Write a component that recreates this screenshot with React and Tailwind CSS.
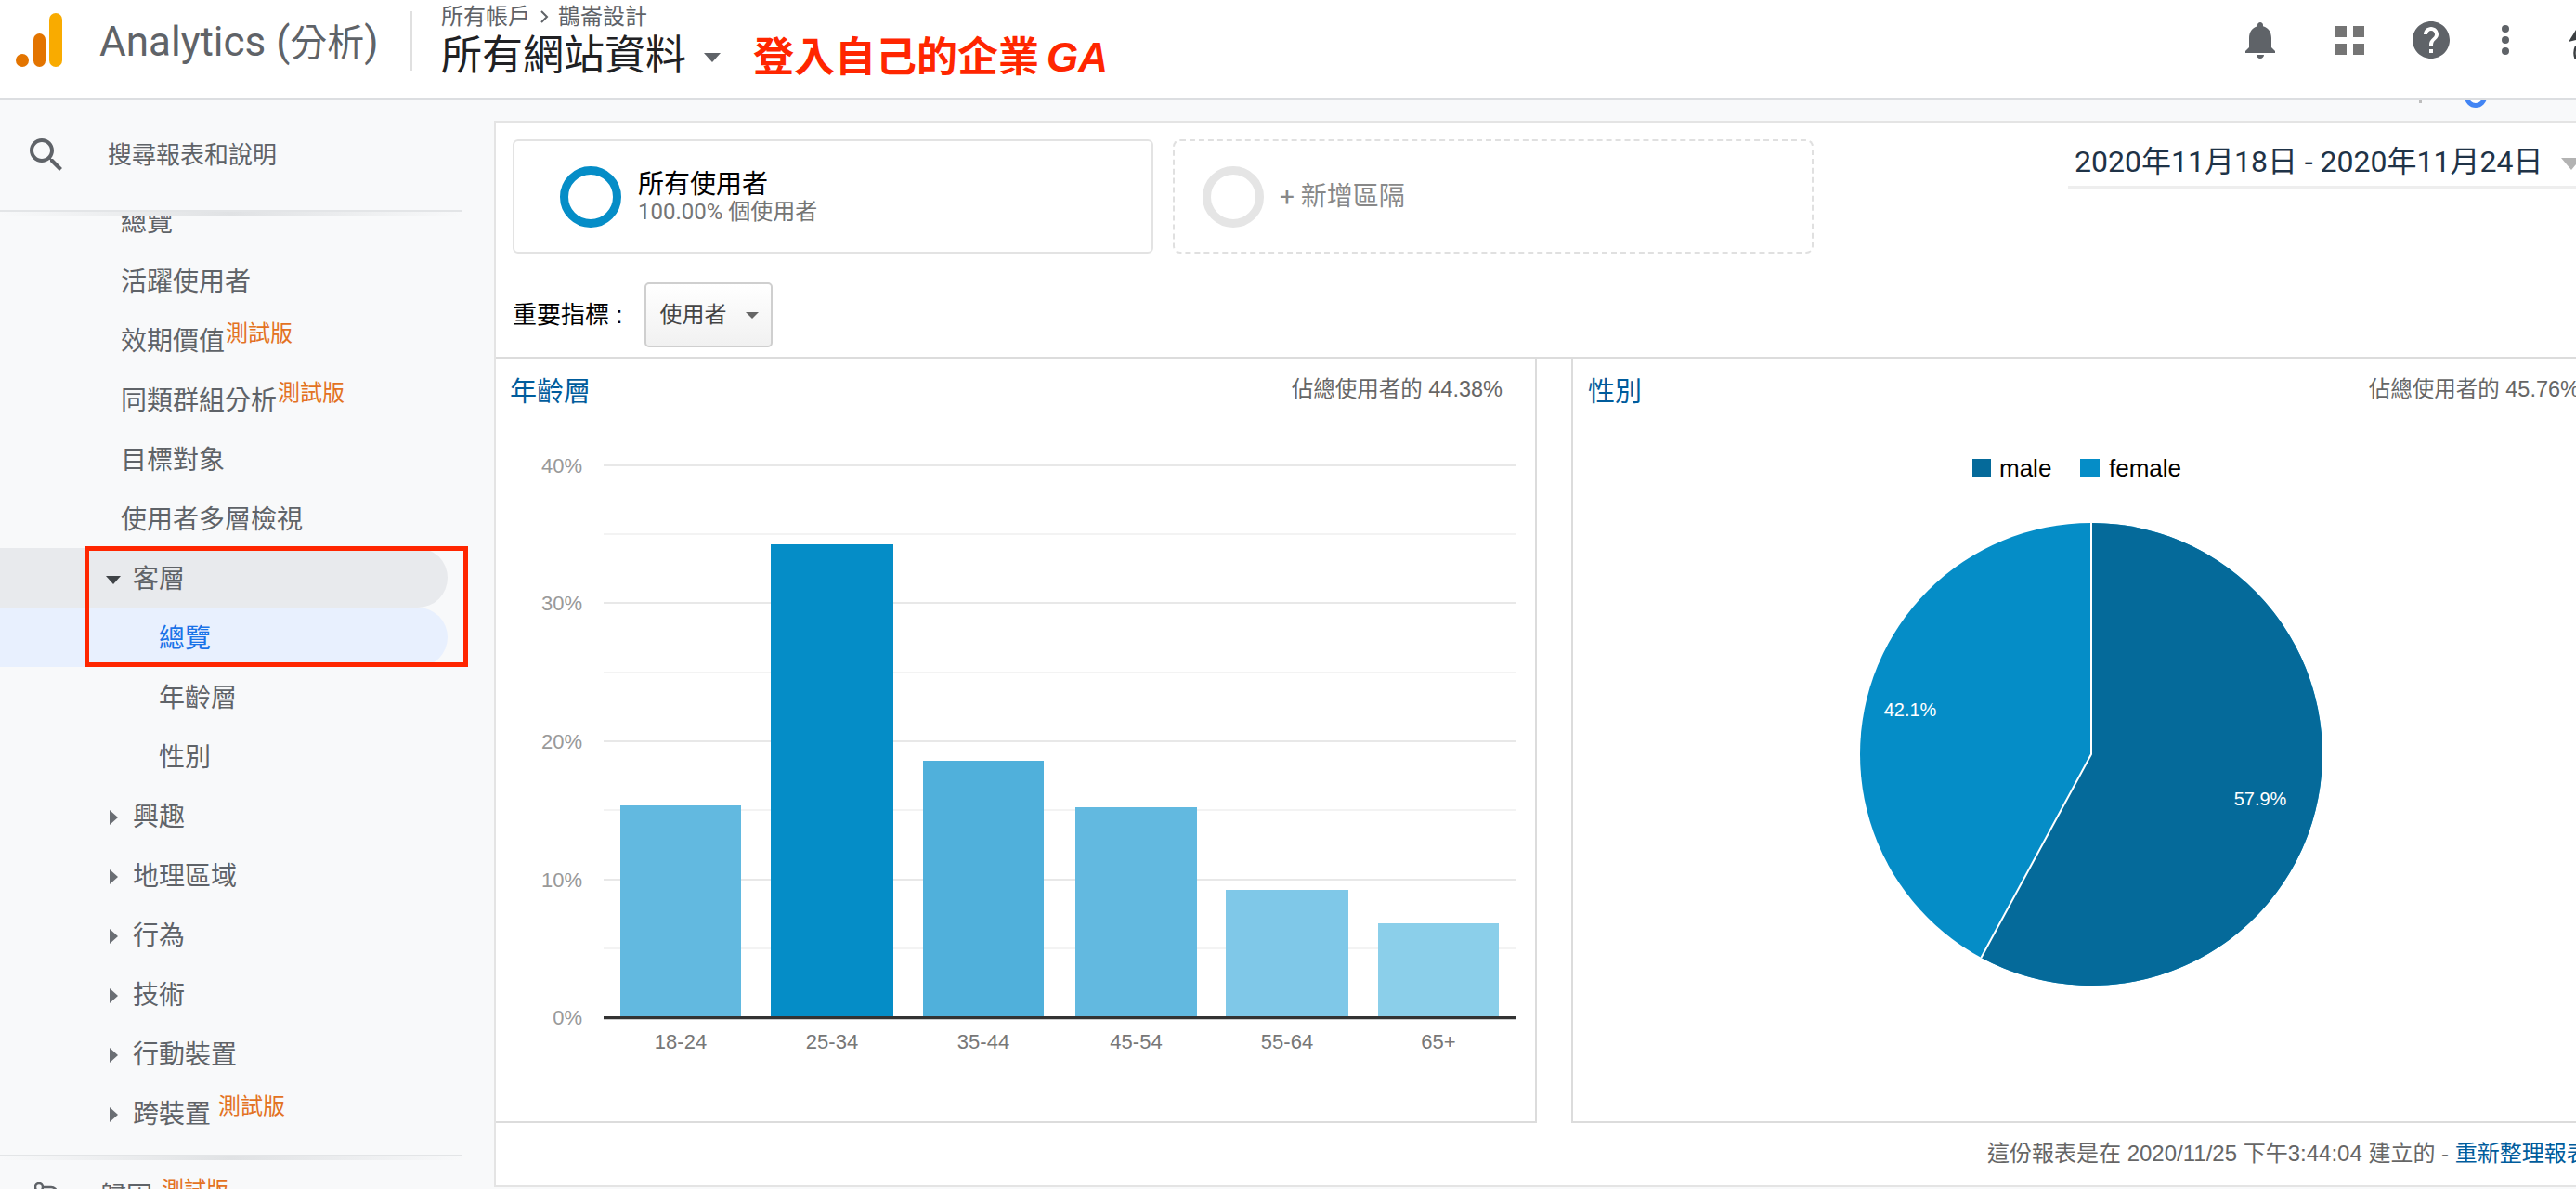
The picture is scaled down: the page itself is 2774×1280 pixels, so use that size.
import React from 'react'

const labelFont = "font-['Liberation_Sans','Noto_Sans_CJK_TC',sans-serif]"

const navRows = [
  { label: '活躍使用者' },
  { label: '效期價值', beta: true },
  { label: '同類群組分析', beta: true },
  { label: '目標對象' },
  { label: '使用者多層檢視' },
]

const collapsedRows = [
  { label: '興趣' },
  { label: '地理區域' },
  { label: '行為' },
  { label: '技術' },
  { label: '行動裝置' },
  { label: '跨裝置', beta: true, gap: true },
]

const ageBars = [
  { label: '18-24', x: 668, w: 130, top: 867, fill: '#62b9e0' },
  { label: '25-34', x: 830, w: 132, top: 586, fill: '#058dc7' },
  { label: '35-44', x: 994, w: 130, top: 819, fill: '#50b0db' },
  { label: '45-54', x: 1158, w: 131, top: 869, fill: '#62b9e0' },
  { label: '55-64', x: 1320, w: 132, top: 958, fill: '#7fc8e8' },
  { label: '65+', x: 1484, w: 130, top: 994, fill: '#8bcfea' },
]

const ageGrid = [
  { y: 501, label: '40%' },
  { y: 575 },
  { y: 649, label: '30%' },
  { y: 724 },
  { y: 798, label: '20%' },
  { y: 872 },
  { y: 947, label: '10%' },
  { y: 1021 },
]

function BetaTag({ className = '' }) {
  return <span className={`text-[24px] leading-none text-[#e37222] mb-[18px] ${className}`}>測試版</span>
}

function Caret({ open }) {
  if (open) {
    return (
      <svg width="16" height="9" viewBox="0 0 16 9" className="mr-[13px] ml-[-4px]">
        <polygon points="0,0 16,0 8,9" fill="#3f4347" />
      </svg>
    )
  }
  return (
    <svg width="9" height="16" viewBox="0 0 9 16" className="mr-[16px]">
      <polygon points="0,0 9,8 0,16" fill="#6a6e73" />
    </svg>
  )
}

function ShadowLine() {
  return (
    <div className="w-[498px] shrink-0">
      <div className="h-[2px] bg-[#e3e5e7]" />
      <div className="h-[4px] bg-linear-to-r from-transparent via-[#e0e2e4] to-transparent" />
    </div>
  )
}

function Header() {
  return (
    <header className="h-[108px] shrink-0 bg-white border-b-2 border-[#dcdee1] flex items-center overflow-hidden font-['Roboto','Noto_Sans_CJK_TC',sans-serif]">
      <svg width="52" height="58" viewBox="0 0 52 58" className="ml-[17px] mt-[-20px]">
        <rect x="36" y="0" width="14" height="58" rx="7" fill="#f9ab00" />
        <rect x="19" y="22" width="13" height="36" rx="6.5" fill="#e37400" />
        <circle cx="7" cy="51" r="7" fill="#e37400" />
      </svg>
      <div className="ml-[38px] mt-[-16px] text-[44px] leading-none text-[#5f6368] whitespace-nowrap w-[335px]">
        Analytics (<span className="text-[40px]">分析</span>)
      </div>
      <div className="w-[2px] h-[64px] bg-[#e0e0e0] mt-[-18px]" />
      <div className="ml-[31px] flex flex-col self-start">
        <div className="mt-[5px] text-[24px] leading-[26px] text-[#5f6368] flex items-center whitespace-nowrap">
          所有帳戶
          <svg width="12" height="16" viewBox="0 0 12 16" className="mx-[9px]"><path d="M3 2l6 6-6 6" fill="none" stroke="#5f6368" strokeWidth="2" /></svg>
          鵲崙設計
        </div>
        <div className="mt-[2px] flex items-center whitespace-nowrap">
          <span className="text-[44px] leading-[50px] text-[#202124]">所有網站資料</span>
          <svg width="18" height="10" viewBox="0 0 18 10" className="ml-[19px] mt-[4px]"><polygon points="0,0 18,0 9,10" fill="#5f6368" /></svg>
          <span className="ml-[35px] mt-[4px] text-[44px] leading-[50px] font-bold text-[#ff2600]">
            登入自己的企業<i className="ml-[8px] font-['Liberation_Sans',sans-serif]">GA</i>
          </span>
        </div>
      </div>
      <div className="ml-auto flex items-center mt-[-20px]">
        <svg width="48" height="48" viewBox="0 0 24 24" fill="#5f6368"><path d="M12 22c1.1 0 2-.9 2-2h-4c0 1.1.89 2 2 2zm6-6v-5c0-3.07-1.64-5.64-4.5-6.32V4c0-.83-.67-1.5-1.5-1.5s-1.5.67-1.5 1.5v.68C7.63 5.36 6 7.92 6 11v5l-2 2v1h16v-1l-2-2z" /></svg>
        <div className="ml-[56px] w-[32px] grid grid-cols-2 gap-[7px] mr-[48px]">
          <div className="h-[12px] bg-[#757575]" />
          <div className="h-[12px] bg-[#757575]" />
          <div className="h-[12px] bg-[#757575]" />
          <div className="h-[12px] bg-[#757575]" />
        </div>
        <svg width="48" height="48" viewBox="0 0 24 24" fill="#5f6368"><path d="M12 2C6.48 2 2 6.48 2 12s4.48 10 10 10 10-4.48 10-10S17.52 2 12 2zm1 17h-2v-2h2v2zm2.07-7.75l-.9.92C13.45 12.9 13 13.5 13 15h-2v-.5c0-1.1.45-2.1 1.17-2.83l1.24-1.26c.37-.36.59-.86.59-1.41 0-1.1-.9-2-2-2s-2 .9-2 2H8c0-2.21 1.79-4 4-4s4 1.79 4 4c0 .88-.36 1.68-.93 2.25z" /></svg>
        <div className="ml-[52px] flex flex-col gap-[4px]">
          <div className="w-[8px] h-[8px] rounded-full bg-[#5f6368]" />
          <div className="w-[8px] h-[8px] rounded-full bg-[#5f6368]" />
          <div className="w-[8px] h-[8px] rounded-full bg-[#5f6368]" />
        </div>
        {/* sliver of the account avatar at the window edge */}
        <svg width="8" height="40" viewBox="0 0 8 40" className="ml-[64px]">
          <polygon points="8,9 0,22 8,20" fill="#3c4043" />
          <path d="M8 27q-3 7 0 14" fill="none" stroke="#3c4043" strokeWidth="2.5" />
        </svg>
      </div>
    </header>
  )
}

function Sidebar() {
  return (
    <aside className="w-[532px] shrink-0 flex flex-col overflow-hidden bg-[#f8f9fa] font-['Roboto','Noto_Sans_CJK_TC',sans-serif] text-[#5f6368]">
      <div className="h-[118px] shrink-0 flex items-center">
        <svg width="48" height="48" viewBox="0 0 24 24" fill="#5f6368" className="ml-[26px]">
          <path d="M15.5 14h-.79l-.28-.27C15.41 12.59 16 11.11 16 9.5 16 5.91 13.09 3 9.5 3S3 5.91 3 9.5 5.91 16 9.5 16c1.61 0 3.09-.59 4.23-1.57l.27.28v.79l5 4.99L20.49 19l-4.99-5zm-6 0C7.01 14 5 11.99 5 9.5S7.01 5 9.5 5 14 7.01 14 9.5 11.99 14 9.5 14z" />
        </svg>
        <span className="ml-[42px] text-[26px]">搜尋報表和說明</span>
      </div>
      <ShadowLine />
      <nav className="h-[1011px] shrink-0 overflow-hidden text-[28px] leading-none">
        <div className="h-[64px] mt-[-26px] pt-[4px] pl-[130px] flex items-center">總覽</div>
        {navRows.map((row) => (
          <div key={row.label} className="h-[64px] pt-[4px] pl-[130px] flex items-center whitespace-nowrap">
            {row.label}
            {row.beta && <BetaTag className="ml-[1px]" />}
          </div>
        ))}
        <div className="relative">
          <div className="h-[64px] w-[482px] pt-[4px] pl-[118px] flex items-center rounded-r-full bg-[#e8eaed]">
            <Caret open />
            客層
          </div>
          <div className="h-[64px] w-[482px] pt-[4px] pl-[171px] flex items-center rounded-r-full bg-[#e8f0fe] text-[#1a73e8]">總覽</div>
          <div className="absolute left-[91px] top-[-2px] w-[413px] h-[130px] border-[5px] border-[#ff2600]" />
        </div>
        <div className="h-[64px] pt-[4px] pl-[171px] flex items-center">年齡層</div>
        <div className="h-[64px] pt-[4px] pl-[171px] flex items-center">性別</div>
        {collapsedRows.map((row) => (
          <div key={row.label} className="h-[64px] pt-[4px] pl-[118px] flex items-center whitespace-nowrap">
            <Caret />
            {row.label}
            {row.beta && <BetaTag className="ml-[8px]" />}
          </div>
        ))}
      </nav>
      <ShadowLine />
      <div className="flex items-start h-[40px] overflow-hidden">
        <svg width="26" height="20" viewBox="0 0 26 20" className="ml-[37px] mt-[24px]">
          <circle cx="5" cy="5" r="4" fill="none" stroke="#5f6368" strokeWidth="2.5" />
          <path d="M9 5h9a6 6 0 0 1 6 6v9" fill="none" stroke="#5f6368" strokeWidth="2.5" />
        </svg>
        <span className="ml-[45px] mt-[26px] text-[28px] leading-none">歸因</span>
        <span className="ml-[10px] mt-[20px] text-[24px] leading-none text-[#e37222]">測試版</span>
      </div>
    </aside>
  )
}

function SegmentCards() {
  return (
    <div className="flex items-start pl-[18px] pt-[18px]">
      <div className="w-[690px] h-[123px] shrink-0 rounded-[6px] border-2 border-[#e3e3e3] flex items-center pl-[49px] font-['Roboto','Noto_Sans_CJK_TC',sans-serif]">
        <div className="w-[66px] h-[66px] rounded-full border-[9px] border-[#058dc7]" />
        <div className="ml-[18px] flex flex-col">
          <span className="text-[28px] leading-[32px] text-black">所有使用者</span>
          <span className="text-[24px] leading-[26px] text-[#757575]">100.00% 個使用者</span>
        </div>
      </div>
      <div className="ml-[21px] w-[690px] h-[123px] shrink-0 rounded-[8px] border-2 border-dashed border-[#e0e0e0] flex items-center pl-[30px] font-['Roboto','Noto_Sans_CJK_TC',sans-serif]">
        <div className="w-[66px] h-[66px] rounded-full border-[9px] border-[#e5e5e5]" />
        <span className="ml-[17px] text-[28px] text-[#888]">+ 新增區隔</span>
      </div>
      <div className="ml-[274px] h-[54px] shrink-0 border-b-4 border-[#eeeeee] pl-[7px] flex items-start whitespace-nowrap font-['Roboto','Noto_Sans_CJK_TC',sans-serif] text-[32px] leading-[48px] text-[#1f3347]">
        2020年11月18日 - 2020年11月24日
        <svg width="22" height="13" viewBox="0 0 22 13" className="ml-[20px] mt-[20px]"><polygon points="0,0 22,0 11,13" fill="#b3b3b3" /></svg>
      </div>
    </div>
  )
}

function AgeChart() {
  return (
    <svg width="1120" height="720" viewBox="534 441 1120 720" className="block">
      {ageGrid.map((g) => (
        <g key={g.y}>
          <line x1="650" x2="1633" y1={g.y} y2={g.y} stroke={g.label ? '#e8e8e8' : '#f3f3f3'} strokeWidth="2" />
          {g.label && <text x="627" y={g.y + 8} textAnchor="end" fontSize="22" fill="#999">{g.label}</text>}
        </g>
      ))}
      <text x="627" y="1103" textAnchor="end" fontSize="22" fill="#999">0%</text>
      {ageBars.map((b) => (
        <g key={b.label}>
          <rect x={b.x} y={b.top} width={b.w} height={1095 - b.top} fill={b.fill} />
          <text x={b.x + b.w / 2} y="1129" textAnchor="middle" fontSize="22" fill="#777">{b.label}</text>
        </g>
      ))}
      <line x1="650" x2="1633" y1="1097.5" y2="1097.5" stroke="#cccccc" strokeWidth="1" />
      <line x1="650" x2="1633" y1="1095.5" y2="1095.5" stroke="#333333" strokeWidth="3" />
    </svg>
  )
}

function GenderChart() {
  return (
    <svg width="1120" height="720" viewBox="1694 441 1120 720" className="block">
      <rect x="2124" y="494" width="20" height="20" fill="#056a9a" />
      <text x="2153" y="513" fontSize="26" fill="#000">male</text>
      <rect x="2240" y="494" width="21" height="20" fill="#058dc7" />
      <text x="2271" y="513" fontSize="26" fill="#000">female</text>
      <circle cx="2252" cy="812" r="249" fill="#058dc7" />
      <path d="M2252 812V563A249 249 0 1 1 2133.4 1031Z" fill="#056a9a" />
      <path d="M2252 563V812L2133.4 1031" fill="none" stroke="#fff" strokeWidth="2" />
      <text x="2057" y="771" textAnchor="middle" fontSize="20" fill="#fff">42.1%</text>
      <text x="2434" y="867" textAnchor="middle" fontSize="20" fill="#fff">57.9%</text>
    </svg>
  )
}

function ChartCard({ title, share, withLeftBorder, children }) {
  return (
    <div className={`h-[823px] shrink-0 border-b-2 border-[#dcdcdc] ${withLeftBorder ? 'w-[1122px] border-l-2' : 'w-[1121px] border-r-2'}`}>
      <div className={`h-[55px] pt-[16px] flex justify-between items-start ${withLeftBorder ? 'pl-[16px] pr-[36px]' : 'pl-[15px] pr-[35px]'}`}>
        <span className="text-[29px] leading-[40px] text-[#005c9c]">{title}</span>
        <span className="text-[23.5px] leading-[34px] text-[#666]">{share}</span>
      </div>
      {children}
    </div>
  )
}

export default function App() {
  return (
    <div className={`w-[2774px] h-[1280px] overflow-hidden flex flex-col bg-[#f8f9fa] ${labelFont}`}>
      <Header />
      <div className="flex-1 flex min-h-0">
        <Sidebar />
        <main className="flex-1 min-w-0 flex flex-col">
          {/* strip above the report panel, clipping the share button */}
          <div className="h-[22px] shrink-0 overflow-hidden flex justify-end items-end pb-[14px] pr-[96px]">
            <div className="w-[3px] h-[3px] shrink-0 self-start bg-[#bdbdbd] mr-[46px]" />
            <div className="w-[24px] h-[24px] shrink-0 rounded-full border-[5px] border-[#4285f4] bg-white" />
          </div>
          <div className="h-[1148px] shrink-0 bg-white border-t-2 border-l-2 border-b-2 border-[#e4e4e4] overflow-hidden">
            <SegmentCards />
            <div className="flex items-center pl-[18px] mt-[31px] h-[70px]">
              <span className="text-[26px] text-black">重要指標 :</span>
              <div className="ml-[24px] w-[138px] h-[70px] rounded-[5px] border-2 border-[#cfcfcf] bg-linear-to-b from-white to-[#f1f1f1] flex items-center pl-[14px]">
                <span className="text-[24px] text-[#444]">使用者</span>
                <svg width="14" height="7" viewBox="0 0 14 7" className="ml-[21px]"><polygon points="0,0 14,0 7,7" fill="#666" /></svg>
              </div>
            </div>
            <div className="mt-[10px] border-t-2 border-[#dcdcdc] flex w-[2280px]">
              <ChartCard title="年齡層" share="佔總使用者的 44.38%"><AgeChart /></ChartCard>
              <div className="w-[37px] shrink-0" />
              <ChartCard title="性別" share="佔總使用者的 45.76%" withLeftBorder><GenderChart /></ChartCard>
            </div>
            <div className="ml-[1606px] mt-[15px] text-[24px] leading-[36px] text-[#666] whitespace-nowrap">
              這份報表是在 2020/11/25 下午3:44:04 建立的 - <span className="text-[#005c9c]">重新整理報表</span>
            </div>
          </div>
        </main>
      </div>
    </div>
  )
}
